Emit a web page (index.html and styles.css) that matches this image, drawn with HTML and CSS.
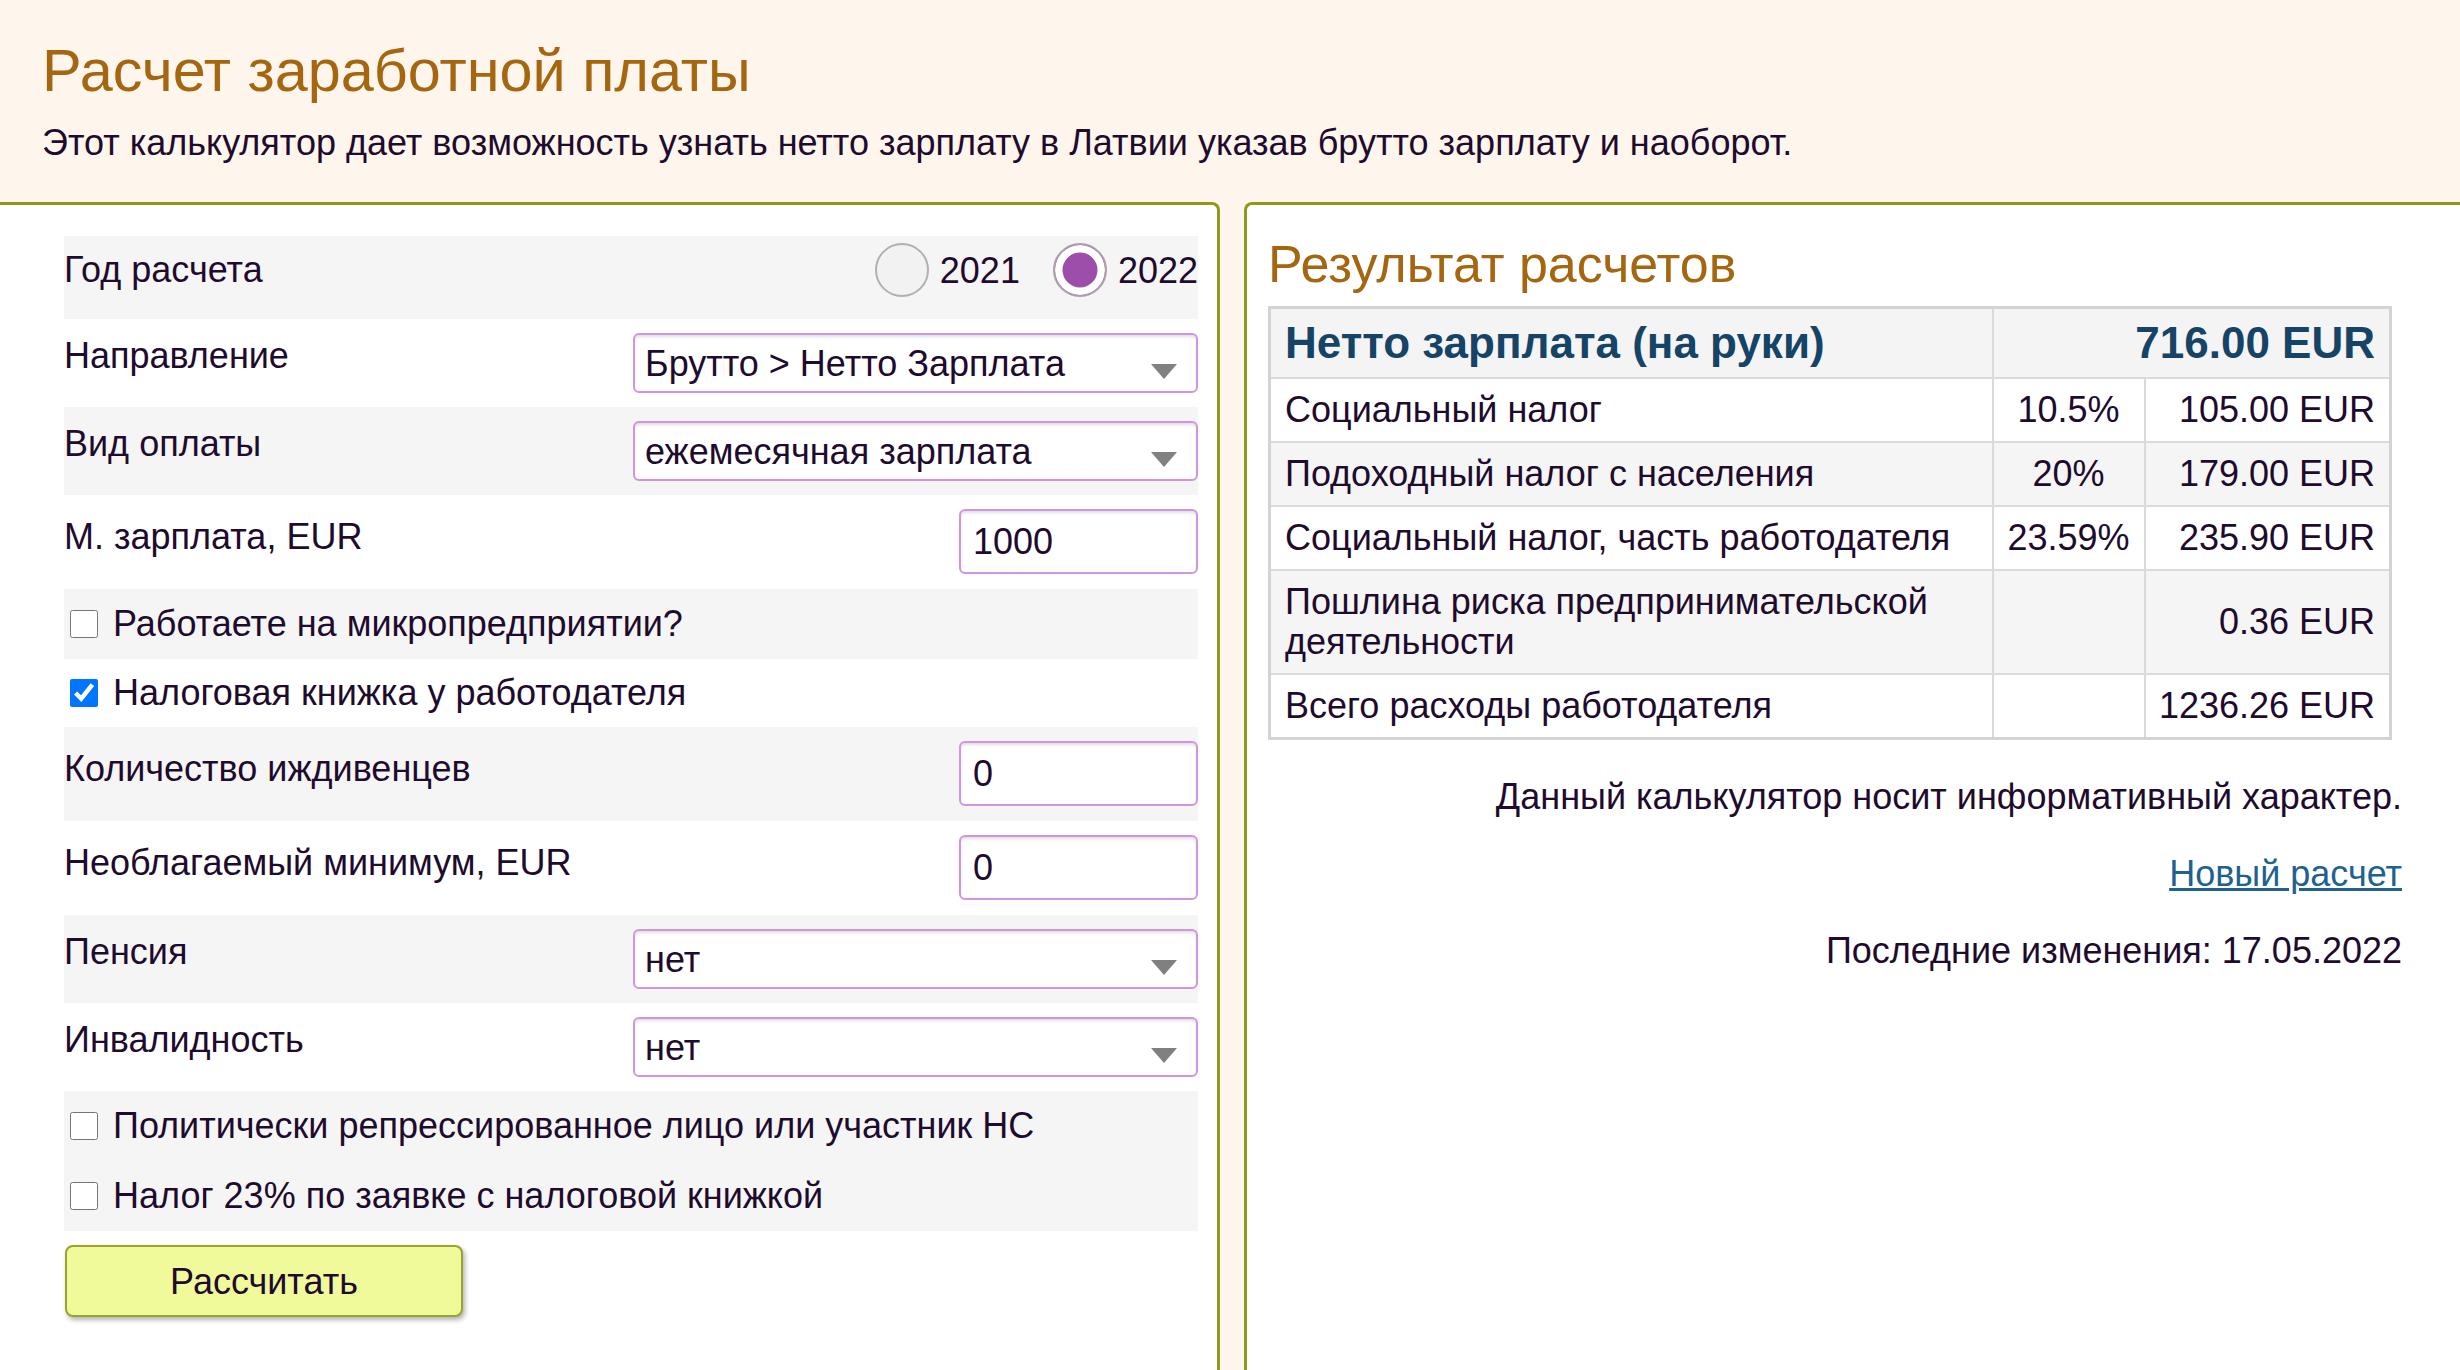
FILE: index.html
```html
<!DOCTYPE html>
<html lang="ru">
<head>
<meta charset="utf-8">
<title>Расчет заработной платы</title>
<link rel="stylesheet" href="styles.css">
</head>
<body>
<header class="hero">
  <h1 class="hero-title">Расчет заработной платы</h1>
  <p class="hero-text">Этот калькулятор дает возможность узнать нетто зарплату в Латвии указав брутто зарплату и наоборот.</p>
</header>
<main class="panels">
  <section class="panel panel-form">
    <form class="calc">
      <div class="row row-shaded row-year">
        <span class="row-label">Год расчета</span>
        <div class="radios">
          <label class="radio-item"><input type="radio" name="year" class="radio"><span>2021</span></label>
          <label class="radio-item"><input type="radio" name="year" class="radio" checked><span>2022</span></label>
        </div>
      </div>
      <div class="row row-select">
        <span class="row-label">Направление</span>
        <div class="select-wrap"><select class="select"><option>Брутто &gt; Нетто Зарплата</option></select></div>
      </div>
      <div class="row row-select row-shaded">
        <span class="row-label">Вид оплаты</span>
        <div class="select-wrap"><select class="select"><option>ежемесячная зарплата</option></select></div>
      </div>
      <div class="row row-input">
        <span class="row-label">М. зарплата, EUR</span>
        <input class="field" type="text" value="1000">
      </div>
      <div class="check-group row-shaded">
        <label class="check-row"><input type="checkbox" class="check"><span>Работаете на микропредприятии?</span></label>
      </div>
      <div class="check-group">
        <label class="check-row check-row-tight"><input type="checkbox" class="check" checked><span>Налоговая книжка у работодателя</span></label>
      </div>
      <div class="row row-input row-shaded">
        <span class="row-label">Количество иждивенцев</span>
        <input class="field" type="text" value="0">
      </div>
      <div class="row row-input">
        <span class="row-label">Необлагаемый минимум, EUR</span>
        <input class="field" type="text" value="0">
      </div>
      <div class="row row-select row-shaded">
        <span class="row-label">Пенсия</span>
        <div class="select-wrap"><select class="select"><option>нет</option></select></div>
      </div>
      <div class="row row-select">
        <span class="row-label">Инвалидность</span>
        <div class="select-wrap"><select class="select"><option>нет</option></select></div>
      </div>
      <div class="check-group check-group-pair row-shaded">
        <label class="check-row"><input type="checkbox" class="check"><span>Политически репрессированное лицо или участник НС</span></label>
        <label class="check-row"><input type="checkbox" class="check"><span>Налог 23% по заявке с налоговой книжкой</span></label>
      </div>
      <button type="button" class="btn">Рассчитать</button>
    </form>
  </section>
  <section class="panel panel-result">
    <h2 class="result-title">Результат расчетов</h2>
    <table class="result-table">
      <colgroup><col class="c1"><col class="c2"><col class="c3"></colgroup>
      <tr class="net-row"><td>Нетто зарплата (на руки)</td><td colspan="2" class="num">716.00 EUR</td></tr>
      <tr><td>Социальный налог</td><td class="pct">10.5%</td><td class="num">105.00 EUR</td></tr>
      <tr class="zebra"><td>Подоходный налог с населения</td><td class="pct">20%</td><td class="num">179.00 EUR</td></tr>
      <tr><td>Социальный налог, часть работодателя</td><td class="pct">23.59%</td><td class="num">235.90 EUR</td></tr>
      <tr class="zebra"><td>Пошлина риска предпринимательской деятельности</td><td class="pct"></td><td class="num">0.36 EUR</td></tr>
      <tr><td>Всего расходы работодателя</td><td class="pct"></td><td class="num">1236.26 EUR</td></tr>
    </table>
    <p class="note">Данный калькулятор носит информативный характер.</p>
    <p class="note"><a href="#" class="link">Новый расчет</a></p>
    <p class="note">Последние изменения: 17.05.2022</p>
  </section>
</main>
</body>
</html>
```
FILE: styles.css
```css
* { box-sizing: border-box; }
html, body { margin: 0; padding: 0; }
body {
  background: #fef6ec;
  font-family: "Liberation Sans", Arial, sans-serif;
  font-size: 36px;
  line-height: 41px;
  color: #1e0b2d;
  height: 1370px;
  overflow: hidden;
}
.hero {
  padding: 36px 42px 39px 42px;
}
.hero-title {
  margin: 0;
  font-size: 59.4px;
  line-height: 69px;
  font-weight: normal;
  color: #a4660f;
}
.hero-text {
  margin: 17px 0 0 0;
  font-size: 36px;
  line-height: 41px;
}
.panels {
  display: flex;
  gap: 24px;
  height: 1168px;
}
.panel {
  background: #fff;
  border-top: 3px solid #8d9a1a;
}
.panel-form {
  width: 1220px;
  flex: none;
  border-right: 3px solid #8d9a1a;
  border-top-right-radius: 8px;
  padding: 31px 19px 0 64px;
}
.panel-result {
  flex: 1;
  border-left: 3px solid #8d9a1a;
  border-top-left-radius: 8px;
  padding: 29px 58px 0 21px;
}
.row {
  display: flex;
  justify-content: space-between;
  align-items: flex-start;
  padding: 14px 0;
}
.row-shaded { background: #f5f5f5; }
.row-label {
  line-height: 40px;
}
.row-select .row-label { padding-top: 3px; }
.row-input { padding: 14px 0 15px 0; }
.row-input .row-label { padding-top: 8px; }
.row-year {
  align-items: center;
  padding: 7px 0 22px 0;
}
.radios {
  display: flex;
  align-items: center;
  gap: 33px;
}
.radio-item {
  display: flex;
  align-items: center;
  gap: 11px;
}
.radio {
  appearance: none;
  -webkit-appearance: none;
  margin: 0;
  width: 54px;
  height: 54px;
  border: 2px solid #b0b0b0;
  border-radius: 50%;
  background: #f2f2f2;
}
.radio:checked {
  border-color: #aba0ab;
  background: #9b4faa;
  box-shadow: inset 0 0 0 7.5px #fff;
}
.select-wrap {
  position: relative;
  width: 565px;
}
.select-wrap::after {
  content: "";
  position: absolute;
  right: 21px;
  top: 31px;
  border-left: 13.5px solid transparent;
  border-right: 13.5px solid transparent;
  border-top: 15px solid #808080;
  pointer-events: none;
}
.select {
  appearance: none;
  -webkit-appearance: none;
  display: block;
  width: 100%;
  height: 60px;
  margin: 0;
  padding: 0 60px 0 10px;
  font: inherit;
  color: #1e0b2d;
  background: #fff;
  border: 2px solid #d095de;
  border-radius: 6px;
  box-shadow: inset 0 3px 4px -2px rgba(0, 0, 0, 0.18);
}
.field {
  display: block;
  width: 239px;
  height: 65px;
  margin: 0;
  padding: 0 12px;
  font: inherit;
  color: #1e0b2d;
  background: #fff;
  border: 2px solid #d095de;
  border-radius: 6px;
  box-shadow: inset 0 3px 4px -2px rgba(0, 0, 0, 0.18);
}
.check-group { display: flex; flex-direction: column; }
.check-row {
  display: flex;
  align-items: center;
  padding: 15px 0;
  line-height: 40px;
}
.check-row-tight { padding: 14px 0; }
.check {
  width: 28px;
  height: 28px;
  margin: 0 15px 0 6px;
  flex: none;
}
.btn {
  display: block;
  margin: 14px 0 0 1px;
  width: 398px;
  height: 72px;
  font: inherit;
  color: #1e0b2d;
  background: #f0fa9a;
  border: 2px solid #9aa32a;
  border-radius: 8px;
  box-shadow: 2px 3px 5px rgba(0, 0, 0, 0.3);
}
.result-title {
  margin: 0 0 12px 0;
  font-size: 52px;
  line-height: 60px;
  font-weight: normal;
  color: #a4660f;
}
.result-table {
  width: calc(100% - 10px);
  border-collapse: collapse;
  border: 3px solid #d3d3d3;
  table-layout: fixed;
}
.c1 { width: 723px; }
.c2 { width: 152px; }
.c3 { width: 246px; }
.result-table td {
  border: 2px solid #dadada;
  padding: 11px 14px;
  line-height: 40px;
  vertical-align: middle;
}
.result-table .pct { text-align: center; padding: 11px 4px; white-space: nowrap; }
.result-table .num { text-align: right; white-space: nowrap; padding-left: 4px; }
.net-row td {
  background: #f4f4f4;
  font-weight: bold;
  font-size: 44px;
  line-height: 50px;
  padding: 9px 14px;
  color: #154467;
}
.zebra td { background: #f5f5f5; }
.note {
  text-align: right;
  margin: 36px 0;
}
.link {
  color: #21618f;
  text-decoration: underline;
}
```
